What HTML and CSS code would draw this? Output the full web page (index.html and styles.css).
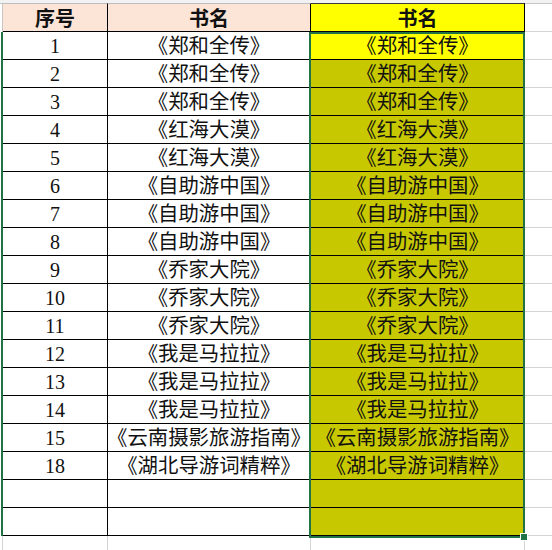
FILE: index.html
```html
<!DOCTYPE html>
<html lang="zh">
<head>
<meta charset="utf-8">
<link rel="stylesheet" href="styles.css">
</head>
<body>
<div class="sheet">
  <div class="topstrip"></div>
  <div class="grid">
    <div class="gut gut-h"></div>
    <div class="hd hd-a">序号</div>
    <div class="hd hd-b">书名</div>
    <div class="hd hd-c">书名</div>
    <div class="rest rest-h"></div>

    <div class="gut"></div><div class="c c1">1</div><div class="c c2">《郑和全传》</div><div class="c c3 first">《郑和全传》</div><div class="rest"></div>
    <div class="gut"></div><div class="c c1">2</div><div class="c c2">《郑和全传》</div><div class="c c3">《郑和全传》</div><div class="rest"></div>
    <div class="gut"></div><div class="c c1">3</div><div class="c c2">《郑和全传》</div><div class="c c3">《郑和全传》</div><div class="rest"></div>
    <div class="gut"></div><div class="c c1">4</div><div class="c c2">《红海大漠》</div><div class="c c3">《红海大漠》</div><div class="rest"></div>
    <div class="gut"></div><div class="c c1">5</div><div class="c c2">《红海大漠》</div><div class="c c3">《红海大漠》</div><div class="rest"></div>
    <div class="gut"></div><div class="c c1">6</div><div class="c c2">《自助游中国》</div><div class="c c3">《自助游中国》</div><div class="rest"></div>
    <div class="gut"></div><div class="c c1">7</div><div class="c c2">《自助游中国》</div><div class="c c3">《自助游中国》</div><div class="rest"></div>
    <div class="gut"></div><div class="c c1">8</div><div class="c c2">《自助游中国》</div><div class="c c3">《自助游中国》</div><div class="rest"></div>
    <div class="gut"></div><div class="c c1">9</div><div class="c c2">《乔家大院》</div><div class="c c3">《乔家大院》</div><div class="rest"></div>
    <div class="gut"></div><div class="c c1">10</div><div class="c c2">《乔家大院》</div><div class="c c3">《乔家大院》</div><div class="rest"></div>
    <div class="gut"></div><div class="c c1">11</div><div class="c c2">《乔家大院》</div><div class="c c3">《乔家大院》</div><div class="rest"></div>
    <div class="gut"></div><div class="c c1">12</div><div class="c c2">《我是马拉拉》</div><div class="c c3">《我是马拉拉》</div><div class="rest"></div>
    <div class="gut"></div><div class="c c1">13</div><div class="c c2">《我是马拉拉》</div><div class="c c3">《我是马拉拉》</div><div class="rest"></div>
    <div class="gut"></div><div class="c c1">14</div><div class="c c2">《我是马拉拉》</div><div class="c c3">《我是马拉拉》</div><div class="rest"></div>
    <div class="gut"></div><div class="c c1">15</div><div class="c c2">《云南摄影旅游指南》</div><div class="c c3">《云南摄影旅游指南》</div><div class="rest"></div>
    <div class="gut"></div><div class="c c1">18</div><div class="c c2">《湖北导游词精粹》</div><div class="c c3">《湖北导游词精粹》</div><div class="rest"></div>
    <div class="gut"></div><div class="c c1"></div><div class="c c2"></div><div class="c c3"></div><div class="rest"></div>
    <div class="gut"></div><div class="c c1"></div><div class="c c2"></div><div class="c c3"></div><div class="rest"></div>

    <div class="gut gut-b"></div><div class="b"></div><div class="b"></div><div class="b"></div><div class="b b-last"></div>

    <div class="selection"></div>
    <div class="handle"></div>
  </div>
</div>
</body>
</html>
```
FILE: styles.css
```css
* { box-sizing: border-box; }
html, body { margin: 0; padding: 0; background: #fff; }
body {
  width: 552px;
  height: 550px;
  overflow: hidden;
  font-family: "Liberation Serif", "Noto Sans CJK SC", serif;
  color: #111;
}
.sheet { width: 552px; height: 550px; display: flex; flex-direction: column; }
.topstrip { height: 3px; background: #f2f2f2; flex: none; }
.grid {
  position: relative;
  flex: 1;
  display: grid;
  grid-template-columns: 3px 105px 203px 214px 1fr;
  grid-template-rows: 29px repeat(18, 28px) 1fr;
}
.gut { background: linear-gradient(90deg, #fff 0 1px, #217346 1px 3px); }
.gut-h { background: #fff; border-right: 1px solid #c6c6c6; border-top: 1px solid #c6c6c6; }
.gut-b { background: #fff; border-right: 1px solid #d4d4d4; }

.hd {
  display: flex; align-items: center; justify-content: center;
  font-family: "Noto Sans CJK SC", sans-serif;
  font-weight: 700;
  font-size: 20px;
  border-top: 1px solid #bdbdbd;
  border-bottom: 1px solid #000;
  border-right: 1px solid #000;
  background: #fce4d6;
  line-height: 1;
}
.hd-c { background: #ffff00; border-top-color: #3a3a3a; }
.rest-h { border-top: 1px solid #c6c6c6; border-bottom: 1px solid #d4d4d4; }

.c {
  display: flex; align-items: center; justify-content: center;
  font-size: 20px;
  line-height: 1;
  white-space: nowrap;
  border-right: 1px solid #000;
  border-bottom: 1px solid #000;
  padding-top: 1px;
}
.c2, .c3 { font-size: 20.4px; overflow: visible; }
.c3 { background: #c8c800; }
.c3.first { background: #ffff00; }
.rest { border-bottom: 1px solid #d4d4d4; }

.b { border-right: 1px solid #d4d4d4; }
.b-last { border-right: none; }

.selection {
  position: absolute;
  left: 309px;
  top: 29px;
  width: 216px;
  height: 506px;
  border: 2px solid #217346;
  pointer-events: none;
}
.handle {
  position: absolute;
  left: 520px;
  top: 530px;
  width: 8px;
  height: 8px;
  background: #217346;
  border: 1px solid #fff;
}
```
